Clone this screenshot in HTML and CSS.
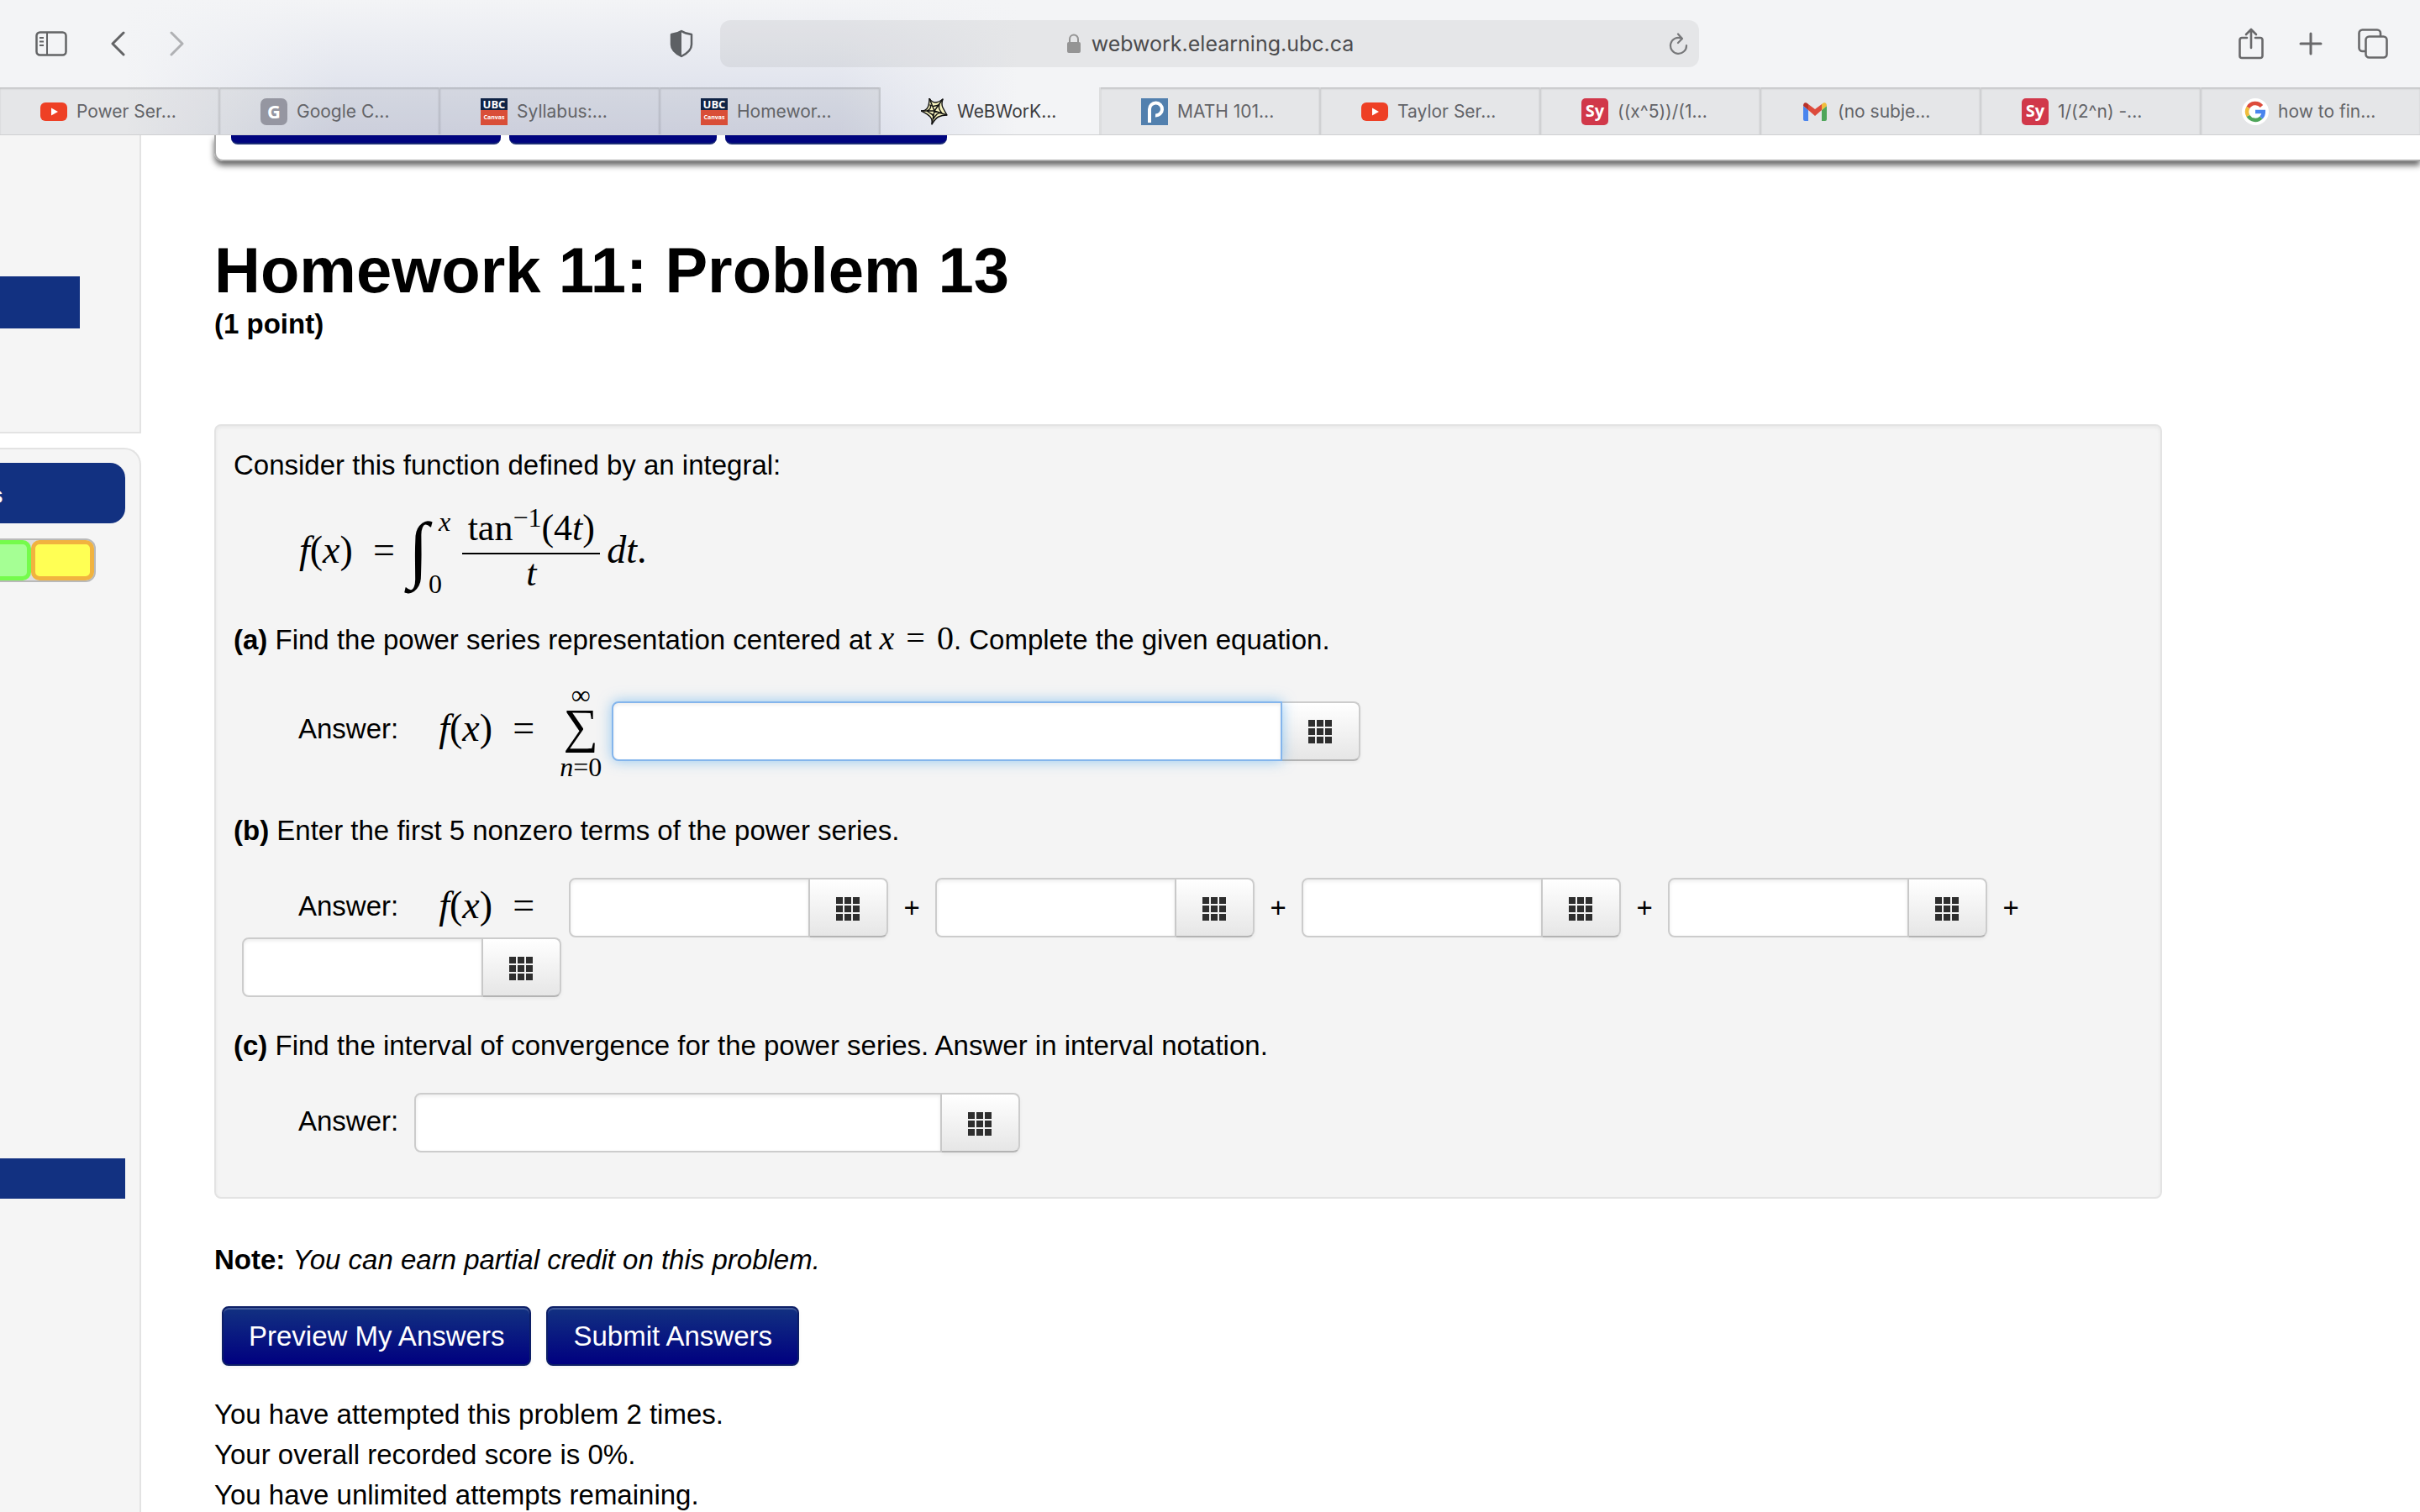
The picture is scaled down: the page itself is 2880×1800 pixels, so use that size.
FILE: index.html
```html
<!DOCTYPE html>
<html lang="en">
<head>
    <meta charset="UTF-8">
    <meta name="viewport" content="width=device-width, initial-scale=1.0">
    <title>WeBWorK : Homework 11 : Problem 13</title>
    <link rel="stylesheet" href="styles.css">
</head>
<body>
    <!-- Shared icons -->
    <svg class="defs" aria-hidden="true">
        <symbol id="icon-youtube" viewBox="0 0 32 32">
            <rect x="0" y="5" width="32" height="22" rx="6" fill="#ee4025"/>
            <path d="M13 11.500l8 4.500-8 4.500z" fill="#fff"/>
        </symbol>
        <symbol id="icon-grid" viewBox="0 0 28 28">
            <path d="M0 0h8v8H0zM10 0h8v8h-8zM20 0h8v8h-8zM0 10h8v8H0zM10 10h8v8h-8zM20 10h8v8h-8zM0 20h8v8H0zM10 20h8v8h-8zM20 20h8v8h-8z" fill="#2e2e2e"/>
        </symbol>
    </svg>

    <header class="browser">
        <div class="toolbar">
            <div class="toolbar-left">
                <button class="tool" aria-label="Sidebar">
                    <svg width="38" height="30" viewBox="0 0 38 30" fill="none" stroke="#636466" stroke-width="2.500">
                        <rect x="1.500" y="1.500" width="35" height="27" rx="4"/>
                        <path d="M14 2v26M5 8h5M5 12.500h5M5 17h5" stroke-width="2"/>
                    </svg>
                </button>
                <button class="tool back" aria-label="Back">
                    <svg width="18" height="30" viewBox="0 0 18 30" fill="none" stroke="#636466" stroke-width="3" stroke-linecap="round" stroke-linejoin="round"><path d="M16 2L3 15l13 13"/></svg>
                </button>
                <button class="tool forward" aria-label="Forward">
                    <svg width="18" height="30" viewBox="0 0 18 30" fill="none" stroke="#b0b1b4" stroke-width="3" stroke-linecap="round" stroke-linejoin="round"><path d="M2 2l13 13L2 28"/></svg>
                </button>
            </div>
            <div class="toolbar-center">
                <button class="tool" aria-label="Privacy report">
                    <svg width="28" height="34" viewBox="0 0 28 34">
                        <path d="M14 2C11 4 6 5.500 2 6v12c0 7 6 11 12 14 6-3 12-7 12-14V6c-4-.5-9-2-12-4z" fill="none" stroke="#5d6064" stroke-width="2.500" stroke-linejoin="round"/>
                        <path d="M14 2C11 4 6 5.500 2 6v12c0 7 6 11 12 14z" fill="#5d6064"/>
                    </svg>
                </button>
                <div class="address">
                    <div class="address-text">
                        <svg width="16" height="24" viewBox="0 0 16 24"><rect x="0" y="10" width="16" height="13" rx="2" fill="#949494"/><path d="M3 11V6.500a5 5 0 0 1 10 0V11" fill="none" stroke="#949494" stroke-width="2"/></svg>
                        <span>webwork.elearning.ubc.ca</span>
                    </div>
                    <button class="tool reload" aria-label="Reload">
                        <svg width="24" height="27" viewBox="0 0 24 27" fill="none" stroke="#77787a" stroke-width="2.200" stroke-linecap="round" stroke-linejoin="round"><path d="M15 6.500A9.500 9.500 0 1 0 21 15M11 1.500l5 5.500-5 5"/></svg>
                    </button>
                </div>
            </div>
            <div class="toolbar-right">
                <button class="tool" aria-label="Share">
                    <svg width="30" height="38" viewBox="0 0 30 38" fill="none" stroke="#69696b" stroke-width="2.600" stroke-linecap="round" stroke-linejoin="round"><path d="M10 12H4a2.500 2.500 0 0 0-2.500 2.500v19A2.500 2.500 0 0 0 4 36h22a2.500 2.500 0 0 0 2.500-2.500v-19A2.500 2.500 0 0 0 26 12h-6M15 24V2M9 8l6-6 6 6"/></svg>
                </button>
                <button class="tool" aria-label="New tab">
                    <svg width="28" height="28" viewBox="0 0 28 28" stroke="#69696b" stroke-width="3" stroke-linecap="round"><path d="M14 2v24M2 14h24"/></svg>
                </button>
                <button class="tool" aria-label="Tab overview">
                    <svg width="36" height="36" viewBox="0 0 36 36" fill="none" stroke="#69696b" stroke-width="2.600" stroke-linejoin="round"><rect x="9.500" y="9.500" width="25" height="25" rx="4"/><path d="M9 27H5.500a4 4 0 0 1-4-4V5.500a4 4 0 0 1 4-4H23a4 4 0 0 1 4 4V9"/></svg>
                </button>
            </div>
        </div>

        <nav class="tabs">
            <a class="tab" href="#"><svg class="favicon"><use href="#icon-youtube"/></svg>Power Ser...</a>
            <a class="tab" href="#">
                <svg class="favicon" viewBox="0 0 32 32"><rect width="32" height="32" rx="7" fill="#9596a1"/><text x="16" y="24" class="icon-text" font-size="22">G</text></svg>Google C...
            </a>
            <a class="tab" href="#">
                <svg class="favicon" viewBox="0 0 32 32"><rect width="32" height="14" fill="#0f2345"/><rect y="14" width="32" height="18" fill="#d94e38"/><text x="16" y="12" class="icon-text" font-size="13">UBC</text><text x="16" y="25" class="icon-text" font-size="7">Canvas</text></svg>Syllabus:...
            </a>
            <a class="tab" href="#">
                <svg class="favicon" viewBox="0 0 32 32"><rect width="32" height="14" fill="#0f2345"/><rect y="14" width="32" height="18" fill="#d94e38"/><text x="16" y="12" class="icon-text" font-size="13">UBC</text><text x="16" y="25" class="icon-text" font-size="7">Canvas</text></svg>Homewor...
            </a>
            <a class="tab active" href="#">
                <svg class="favicon" viewBox="0 0 32 32" stroke="#111" stroke-width="1.400" stroke-linejoin="round">
                    <path d="M10 0q3 5 7 5t9-4q-2 6 0 10t5 9q-6 0-10 2t-8 9q1-6-2-9T0 15q6 0 8-4t2-11z" fill="#f6f2bd"/>
                    <path d="M10 0l6 15L26 1M31 20l-15-5-3 16M0 15h16M11 8q3 2 6 1 3 0 5-2-1 4 0 6t3 5q-4-1-6 1t-4 5q0-4-2-5t-6-4q3-1 4-3t0-4z" fill="none"/>
                </svg>WeBWorK...
            </a>
            <a class="tab" href="#">
                <svg class="favicon" viewBox="0 0 32 32"><rect width="32" height="32" fill="#5280ae"/><path d="M10 29V13a7.500 7.500 0 1 1 7 7.500" fill="none" stroke="#fff" stroke-width="4"/></svg>MATH 101...
            </a>
            <a class="tab" href="#"><svg class="favicon"><use href="#icon-youtube"/></svg>Taylor Ser...</a>
            <a class="tab" href="#">
                <svg class="favicon" viewBox="0 0 32 32"><rect width="32" height="32" rx="5" fill="#d1384a"/><text x="16" y="22" class="icon-text" font-size="20">Sy</text></svg>((x^5))/(1...
            </a>
            <a class="tab" href="#">
                <svg class="favicon" viewBox="0 0 32 32">
                    <path d="M2 9l6 5v13H4a2 2 0 0 1-2-2z" fill="#4a85ee"/>
                    <path d="M30 9l-6 5v13h4a2 2 0 0 0 2-2z" fill="#4fa65a"/>
                    <path d="M8 7l8 6 8-6v7l-8 7-8-7z" fill="#dd4b3c"/>
                    <path d="M2 9c0-4 3-5 6-2v7z" fill="#b8322a"/>
                    <path d="M30 9c0-4-3-5-6-2v7z" fill="#f0bd3c"/>
                </svg>(no subje...
            </a>
            <a class="tab" href="#">
                <svg class="favicon" viewBox="0 0 32 32"><rect width="32" height="32" rx="5" fill="#d1384a"/><text x="16" y="22" class="icon-text" font-size="20">Sy</text></svg>1/(2^n) -...
            </a>
            <a class="tab" href="#">
                <svg class="favicon" viewBox="0 0 32 32" fill="none" stroke-width="4.500">
                    <circle cx="16" cy="16" r="16" fill="#fff"/>
                    <path d="M23.500 9.500A9.800 9.800 0 0 0 7.500 11" stroke="#dd4b3c"/>
                    <path d="M7.500 11a9.800 9.800 0 0 0 0 10" stroke="#f0bd3c"/>
                    <path d="M7.500 21a9.800 9.800 0 0 0 15.500 2" stroke="#4fa65a"/>
                    <path d="M23 23a9.800 9.800 0 0 0 2.800-7H16" stroke="#4a85ee"/>
                </svg>how to fin...
            </a>
        </nav>
    </header>

    <div class="page">
        <aside class="sidebar">
            <div class="side-panel side-menu">
                <div class="side-selected"></div>
            </div>
            <div class="side-panel side-problems">
                <div class="side-title"><span>s</span></div>
                <div class="progress">
                    <span class="done"></span>
                    <span class="current"></span>
                </div>
                <div class="side-current"></div>
            </div>
        </aside>

        <main class="main">
            <div class="masthead">
                <button class="mast-btn mast-prev" aria-label="Previous Problem"></button>
                <button class="mast-btn mast-list" aria-label="Problem List"></button>
                <button class="mast-btn mast-next" aria-label="Next Problem"></button>
            </div>

            <h1>Homework 11: Problem 13</h1>
            <p class="points">(1 point)</p>

            <form class="problem">
                <p>Consider this function defined by an integral:</p>
                <div class="formula">
                    <span class="math lhs"><span><i>f</i>(<i>x</i>)</span><span>=</span></span>
                    <span class="integral">
                        <span class="int-sign">∫</span>
                        <span class="limits"><i>x</i><span>0</span></span>
                    </span>
                    <span class="fraction">
                        <span class="numerator">tan<sup>−1</sup>(4<i>t</i>)</span>
                        <span class="denominator"><i>t</i></span>
                    </span>
                    <span class="math"><i>dt</i>.</span>
                </div>

                <p><b>(a)</b> Find the power series representation centered at <span class="inline-math"><i>x</i><span class="rel">=</span>0</span>. Complete the given equation.</p>
                <div class="answer-row row-a">
                    <label for="ans1">Answer:</label>
                    <span class="math lhs">
                        <span><i>f</i>(<i>x</i>)</span><span>=</span>
                    </span>
                    <span class="sum">
                        <span class="sum-limit">∞</span>
                        <span class="sum-sign">∑</span>
                        <span class="sum-limit"><i>n</i>=0</span>
                    </span>
                    <div class="entry">
                        <input type="text" id="ans1" class="wide focused">
                        <button type="button" aria-label="Equation editor"><svg><use href="#icon-grid"/></svg></button>
                    </div>
                </div>

                <p><b>(b)</b> Enter the first 5 nonzero terms of the power series.</p>
                <div class="answer-row row-b">
                    <label for="ans2">Answer:</label>
                    <span class="math lhs">
                        <span><i>f</i>(<i>x</i>)</span><span>=</span>
                    </span>
                    <div class="entry first">
                        <input type="text" id="ans2">
                        <button type="button" aria-label="Equation editor"><svg><use href="#icon-grid"/></svg></button>
                    </div>
                    <span class="plus">+</span>
                    <div class="entry">
                        <input type="text" aria-label="Term 2">
                        <button type="button" aria-label="Equation editor"><svg><use href="#icon-grid"/></svg></button>
                    </div>
                    <span class="plus">+</span>
                    <div class="entry">
                        <input type="text" aria-label="Term 3">
                        <button type="button" aria-label="Equation editor"><svg><use href="#icon-grid"/></svg></button>
                    </div>
                    <span class="plus">+</span>
                    <div class="entry">
                        <input type="text" aria-label="Term 4">
                        <button type="button" aria-label="Equation editor"><svg><use href="#icon-grid"/></svg></button>
                    </div>
                    <span class="plus">+</span>
                    <div class="entry">
                        <input type="text" aria-label="Term 5">
                        <button type="button" aria-label="Equation editor"><svg><use href="#icon-grid"/></svg></button>
                    </div>
                </div>

                <p><b>(c)</b> Find the interval of convergence for the power series. Answer in interval notation.</p>
                <div class="answer-row row-c">
                    <label for="ans7">Answer:</label>
                    <div class="entry">
                        <input type="text" id="ans7" class="medium">
                        <button type="button" aria-label="Equation editor"><svg><use href="#icon-grid"/></svg></button>
                    </div>
                </div>
            </form>

            <p class="note"><b>Note:</b> <i>You can earn partial credit on this problem.</i></p>
            <div class="actions">
                <button class="btn-primary">Preview My Answers</button>
                <button class="btn-primary">Submit Answers</button>
            </div>
            <div class="attempts">
                <p>You have attempted this problem 2 times.</p>
                <p>Your overall recorded score is 0%.</p>
                <p>You have unlimited attempts remaining.</p>
            </div>
        </main>
    </div>
</body>
</html>
```
FILE: styles.css
```css
:root {
    --navy: #123181;
    --panel: #f5f5f5;
    --line: #e3e3e3;
    --chrome: #f3f4f6;
}

* {
    box-sizing: border-box;
}

body {
    margin: 0;
    height: 100vh;
    overflow: hidden;
    display: flex;
    flex-direction: column;
    background: #fff;
    color: #000;
    font: 33px/48px "Liberation Sans", Arial, sans-serif;
}

h1, p {
    margin: 0;
}

button {
    font: inherit;
    cursor: pointer;
}

.defs {
    position: absolute;
    width: 0;
    height: 0;
}

/* Browser bar */
.browser {
    flex: none;
    border-bottom: 1px solid #cfd0d2;
    background:
        linear-gradient(to bottom, var(--chrome), rgba(243, 244, 246, 0)),
        linear-gradient(to right, var(--chrome) 150px, #d8dce9 400px, #d8dce9 1000px, var(--chrome) 1210px);
    font-family: Inter, "Liberation Sans", sans-serif;
}

.toolbar {
    height: 104px;
    padding: 0 38px 0 42px;
    display: flex;
    align-items: center;
    justify-content: space-between;
}

.toolbar-left,
.toolbar-center,
.toolbar-right {
    display: flex;
    align-items: center;
}

.toolbar-left {
    width: 580px;
}

.toolbar-right {
    width: 580px;
    justify-content: flex-end;
    gap: 42px;
}

.toolbar-center {
    gap: 32px;
    flex: 1;
    margin: 0 240px 0 175px;
}

.tool {
    display: flex;
    padding: 0;
    border: 0;
    background: none;
}

.back {
    margin-left: 51px;
}

.forward {
    margin-left: 53px;
}

.address {
    flex: 1;
    height: 56px;
    display: flex;
    align-items: center;
    border-radius: 12px;
    background: rgba(0, 0, 0, 0.055);
}

.address-text {
    flex: 1;
    display: flex;
    align-items: center;
    justify-content: center;
    gap: 13px;
    padding-left: 38px;
    font-size: 25px;
    line-height: 32px;
    color: #4c4c4e;
}

.reload {
    margin-right: 12px;
}

.tabs {
    display: flex;
    height: 56px;
}

.tab {
    flex: 1 1 0;
    min-width: 0;
    display: flex;
    align-items: center;
    gap: 11px;
    padding: 2px 0 0 48px;
    border-right: 2px solid rgba(0, 0, 0, 0.09);
    background: rgba(0, 0, 0, 0.055);
    box-shadow: inset 0 2px 2px rgba(0, 0, 0, 0.14);
    color: #636468;
    font-size: 21px;
    line-height: 28px;
    white-space: nowrap;
    text-decoration: none;
}

.tab:last-child {
    border-right: 0;
}

.tab.active {
    background: none;
    box-shadow: none;
    color: #3c3c3e;
}

.favicon {
    flex: none;
    width: 32px;
    height: 32px;
}

.icon-text {
    fill: #fff;
    font-family: "Open Sans", sans-serif;
    font-weight: bold;
    text-anchor: middle;
}

/* Page */
.page {
    flex: 1;
    min-height: 0;
    display: flex;
}

.sidebar {
    flex: none;
    width: 168px;
    display: flex;
    flex-direction: column;
    gap: 17px;
}

.side-panel {
    border: 2px solid var(--line);
    border-left: 0;
    background: var(--panel);
}

.side-menu {
    height: 355px;
    border-top: 0;
    padding-top: 168px;
}

.side-selected {
    width: 95px;
    height: 62px;
    background: var(--navy);
}

.side-problems {
    flex: 1;
    border-bottom: 0;
    border-top-right-radius: 20px;
    padding: 16px 17px 0 0;
}

.side-title {
    height: 72px;
    display: flex;
    align-items: center;
    border-radius: 0 18px 18px 0;
    background: var(--navy);
    color: #fff;
    font-size: 28px;
    font-weight: bold;
    overflow: hidden;
}

/* the title runs off the left edge of the window */
.side-title span {
    margin-left: -12px;
    padding-top: 6px;
}

.progress {
    width: 114px;
    height: 52px;
    margin-top: 18px;
    display: flex;
    border: 2px solid #b9b9b9;
    border-left: 0;
    border-radius: 0 12px 12px 0;
    background: #ddd;
}

.progress span {
    border: 5px solid #f1b33f;
    border-radius: 10px;
    background: #ffff54;
}

.progress .done {
    width: 37px;
    border-color: #75fb4c;
    border-left: 0;
    border-radius: 0 10px 10px 0;
    background: #a5ff94;
}

.progress .current {
    flex: 1;
}

.side-current {
    height: 48px;
    margin-top: 686px;
    background: var(--navy);
}

.main {
    flex: 1;
    min-width: 0;
    padding-left: 87px;
}

.masthead {
    height: 31px;
    display: flex;
    align-items: flex-start;
    gap: 10px;
    padding-left: 18px;
    border-left: 2px solid #aaa;
    border-bottom: 2px solid #aaa;
    border-bottom-left-radius: 10px;
    box-shadow: 0 5px 7px rgba(0, 0, 0, 0.6);
    clip-path: inset(0 0 -20px -10px);
}

.mast-btn {
    height: 11px;
    padding: 0;
    border: 0;
    border-bottom: 2px solid #1b2c75;
    border-radius: 0 0 8px 8px;
    background: #00047e;
}

.mast-prev {
    width: 321px;
}

.mast-list {
    width: 247px;
}

.mast-next {
    width: 264px;
}

h1 {
    margin-top: 90px;
    font-size: 76px;
    line-height: 80px;
}

.points {
    font-weight: bold;
}

.problem {
    margin: 95px 307px 0 0;
    padding: 23px 20px 53px 21px;
    border: 2px solid var(--line);
    border-radius: 8px;
    background: #f4f4f4;
    box-shadow: inset 0 2px 4px rgba(0, 0, 0, 0.05);
}

/* Math */
.math,
.integral,
.fraction,
.sum,
.inline-math {
    font-family: "Liberation Serif", serif;
}

.math {
    font-size: 46px;
    line-height: 44px;
    padding-bottom: 6px;
}

.lhs {
    width: 114px;
    display: flex;
    justify-content: space-between;
}

.inline-math {
    font-size: 40px;
    line-height: 40px;
}

.rel {
    margin: 0 14px;
}

.formula {
    height: 160px;
    padding-left: 78px;
    display: flex;
    align-items: center;
}

.integral {
    display: flex;
    align-items: center;
    margin: 0 14px 0 16px;
}

.int-sign {
    font-size: 88px;
    line-height: 90px;
    padding-bottom: 8px;
}

.limits {
    height: 104px;
    display: flex;
    flex-direction: column;
    justify-content: space-between;
    font-size: 32px;
    line-height: 30px;
}

.limits i {
    padding-left: 12px;
}

.fraction {
    display: flex;
    flex-direction: column;
    width: 164px;
    margin-right: 8px;
    padding-bottom: 5px;
    font-size: 44px;
    line-height: 39px;
    text-align: center;
}

.numerator {
    padding-bottom: 10px;
    border-bottom: 2px solid #000;
}

.numerator sup {
    font-size: 32px;
    line-height: 0;
}

.denominator {
    padding-top: 3px;
}

.sum {
    width: 54px;
    margin-left: 28px;
    display: flex;
    flex-direction: column;
    align-items: center;
}

.sum-sign {
    font-size: 58px;
    line-height: 52px;
    padding-bottom: 10px;
}

.sum-limit {
    font-size: 32px;
    line-height: 24px;
}

/* Answer blanks */
.answer-row {
    display: flex;
    flex-wrap: wrap;
    align-items: center;
}

.answer-row label {
    margin-left: 77px;
    padding-bottom: 4px;
}

.answer-row .lhs {
    margin-left: 48px;
}

.row-a {
    height: 179px;
    padding-bottom: 11px;
}

.row-b {
    padding: 32px 0 34px;
}

.row-b .first {
    margin-left: 41px;
}

.row-c {
    padding-top: 32px;
}

.row-c .entry {
    margin-left: 19px;
}

.entry {
    display: flex;
    height: 71px;
    margin-left: 10px;
}

.entry input {
    width: 287px;
    padding: 8px 12px;
    border: 2px solid #ccc;
    border-radius: 8px 0 0 8px;
    background: #fff;
    box-shadow: inset 0 2px 4px rgba(0, 0, 0, 0.08);
    font: inherit;
    outline: 0;
}

.entry .medium {
    width: 628px;
}

.entry .wide {
    width: 798px;
}

.entry .focused,
.entry input:focus {
    z-index: 1;
    border-color: #84b5ec;
    box-shadow: inset 0 2px 4px rgba(0, 0, 0, 0.08), 0 0 16px rgba(82, 168, 236, 0.6);
}

.entry button {
    width: 93px;
    display: flex;
    align-items: center;
    justify-content: center;
    padding: 2px 2px 0 0;
    border: 2px solid #ccc;
    border-left: 0;
    border-bottom-color: #b3b3b3;
    border-radius: 0 8px 8px 0;
    background: linear-gradient(#fff, #e6e6e6);
    box-shadow: 0 2px 4px rgba(0, 0, 0, 0.05);
}

.entry svg {
    width: 28px;
    height: 28px;
}

.plus {
    width: 46px;
    padding-left: 10px;
    text-align: center;
}

/* Footer of the problem */
.note {
    margin-top: 49px;
}

.actions {
    display: flex;
    gap: 18px;
    margin: 31px 0 34px 9px;
}

.btn-primary {
    height: 71px;
    padding: 0 30px;
    border: 2px solid #0d1f66;
    border-radius: 8px;
    background: linear-gradient(#123181, #000080);
    box-shadow: inset 0 2px 0 rgba(255, 255, 255, 0.2), 0 2px 4px rgba(0, 0, 0, 0.05);
    color: #fff;
}
```
